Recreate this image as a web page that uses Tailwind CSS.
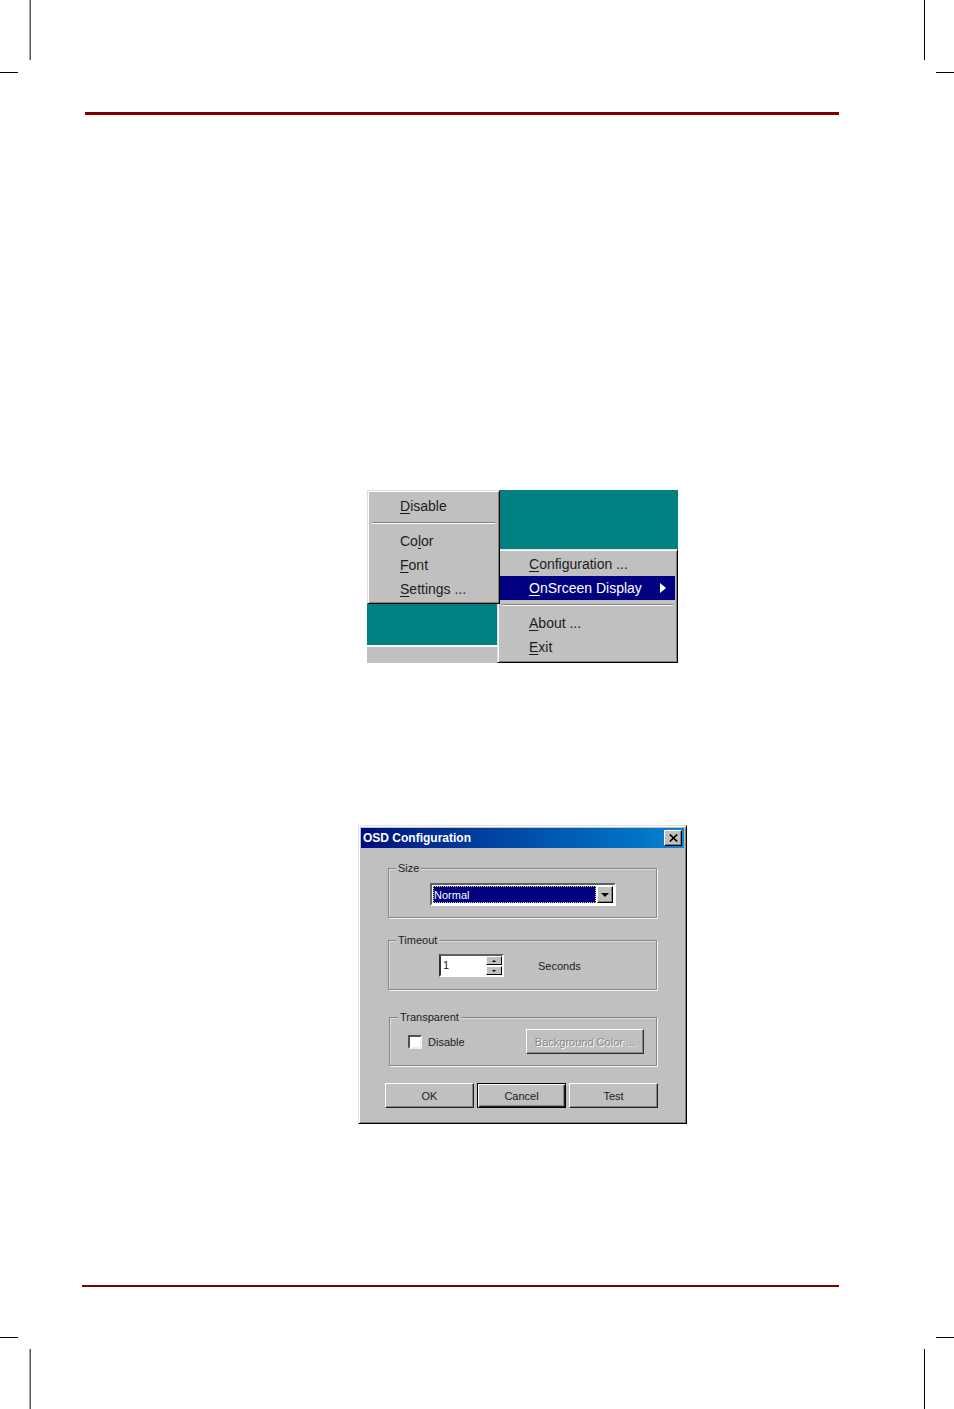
<!DOCTYPE html>
<html lang="en">
<head>
<meta charset="utf-8">
<title>OnScreen Display</title>
<script src="https://cdn.jsdelivr.net/npm/@tailwindcss/browser@4"></script>
</head>
<body class="bg-white font-['Liberation_Sans',Arial,sans-serif] text-[#1c1c1c]">
<div class="relative flex min-h-screen flex-col pr-[115px] pl-[85px]">
  <!-- crop marks -->
  <div aria-hidden="true">
    <i class="absolute top-0 left-[29px] h-15 w-px bg-[#a8a8a8]"></i><i class="absolute top-0 left-[30px] h-15 w-px bg-[#555555]"></i>
    <i class="absolute top-[72px] left-0 h-px w-[18px] bg-black"></i>
    <i class="absolute top-0 right-[29px] h-15 w-px bg-black"></i>
    <i class="absolute top-[72px] right-0 h-px w-[18px] bg-black"></i>
    <i class="absolute bottom-0 left-[29px] h-15 w-px bg-[#a8a8a8]"></i><i class="absolute bottom-0 left-[30px] h-15 w-px bg-[#555555]"></i>
    <i class="absolute bottom-[71px] left-0 h-px w-[18px] bg-black"></i>
    <i class="absolute right-[29px] bottom-0 h-15 w-px bg-black"></i>
    <i class="absolute right-0 bottom-[71px] h-px w-[18px] bg-black"></i>
  </div>

  <header class="mt-[112px] h-[3px] bg-[#800000]"></header>

  <main class="flex grow flex-col items-center pl-[121px]">
    <!-- tray menu with its submenu -->
    <section class="relative mt-[375px] flex h-[173px] w-[311px] bg-[#008080] text-[14px]">
      <div class="absolute bottom-0 left-0 h-[18px] w-[130px] border-t-2 border-white bg-[#c0c0c0]"></div>
      <div role="menu" class="z-10 flex h-[114px] w-[133px] flex-col self-start border border-t-[#dfdfdf] border-r-black border-b-black border-l-[#dfdfdf] bg-[#c0c0c0] pt-[3px] shadow-[inset_1px_1px_0_#fff,inset_-1px_-1px_0_#808080]">
        <button role="menuitem" class="h-6 pl-8 text-left"><u class="underline-offset-2">D</u>isable</button>
        <hr class="mx-1 mt-1 mb-[6px] h-[2px] shrink-0 border-t border-b border-t-[#808080] border-b-white">
        <button role="menuitem" class="h-[23px] pl-8 text-left">Co<u class="underline-offset-2">l</u>or</button>
        <button role="menuitem" class="h-6 pl-8 text-left"><u class="underline-offset-2">F</u>ont</button>
        <button role="menuitem" class="h-6 pl-8 text-left"><u class="underline-offset-2">S</u>ettings ...</button>
      </div>
      <div role="menu" class="z-[1] -ml-[3px] flex h-[114px] grow flex-col self-end border border-t-[#dfdfdf] border-r-black border-b-black border-l-[#dfdfdf] bg-[#c0c0c0] px-[2px] pt-[2px] shadow-[inset_1px_1px_0_#fff,inset_-1px_-1px_0_#808080]">
        <button role="menuitem" class="h-6 pl-[29px] text-left"><u class="underline-offset-2">C</u>onfiguration ...</button>
        <button role="menuitem" class="flex h-6 items-center justify-between bg-[#000080] pr-[9px] pl-[29px] text-left text-white"><span><u class="underline-offset-2">O</u>nSrceen Display</span>
          <svg class="h-[10px] w-[6px]" viewBox="0 0 6 10" fill="#fff"><path d="M0 0 6 5 0 10Z"/></svg>
        </button>
        <hr class="mx-[2px] mt-1 mb-[6px] h-[2px] border-t border-b border-t-[#808080] border-b-white">
        <button role="menuitem" class="h-[23px] pl-[29px] text-left"><u class="underline-offset-2">A</u>bout ...</button>
        <button role="menuitem" class="h-6 pl-[29px] text-left"><u class="underline-offset-2">E</u>xit</button>
      </div>
    </section>

    <!-- OSD Configuration dialog -->
    <form class="mt-[162px] w-[329px] border border-t-[#dfdfdf] border-r-black border-b-black border-l-[#dfdfdf] bg-[#c0c0c0] p-[2px] pb-[15px] text-[11px] leading-[14px] shadow-[inset_1px_1px_0_#fff,inset_-1px_-1px_0_#808080]">
      <div class="flex h-5 items-center justify-between bg-linear-to-r from-[#000a80] to-[#1084d0] pr-[2px] pl-[2px]">
        <h1 class="text-[12px] font-bold text-white">OSD Configuration</h1>
        <button type="button" aria-label="Close" class="flex h-4 w-[18px] items-center justify-center border border-t-white border-r-black border-b-black border-l-white bg-[#c0c0c0] shadow-[inset_-1px_-1px_0_#808080]">
          <svg class="h-[8px] w-[9px]" viewBox="0 0 9 8" stroke="#000" stroke-width="1.7"><path d="M.8.5 8.2 7.5M8.2.5.8 7.5"/></svg>
        </button>
      </div>

      <div class="flex flex-col px-[27px] pt-[13px]">
        <fieldset class="h-[57px] border border-[#868686] pt-2 pl-[41px] shadow-[1px_1px_0_#f4f4f4,inset_1px_1px_0_#dcdcdc]">
          <legend class="-ml-[34px] bg-[#c0c0c0] px-[2px]"><label for="size">Size</label></legend>
          <div class="flex h-[23px] w-[186px] border-2 border-t-[#606060] border-r-white border-b-white border-l-[#606060] bg-white p-px">
            <div class="flex grow border border-dotted border-[#d8d880] bg-[#000080]">
              <select id="size" class="w-full appearance-none bg-[#000080] text-white outline-none"><option>Normal</option></select>
            </div>
            <div class="pointer-events-none ml-px flex w-4 items-center justify-center border border-t-white border-r-black border-b-black border-l-white bg-[#c0c0c0] shadow-[inset_-1px_-1px_0_#808080]">
              <svg class="h-1 w-2" viewBox="0 0 8 4"><path d="M0 0H8L4 4Z"/></svg>
            </div>
          </div>
        </fieldset>

        <fieldset class="mt-[15px] h-[57px] border border-[#868686] pt-[7px] pl-[50px] shadow-[1px_1px_0_#f4f4f4,inset_1px_1px_0_#dcdcdc]">
          <legend class="-ml-[43px] bg-[#c0c0c0] px-[2px]"><label for="timeout">Timeout</label></legend>
          <div class="flex items-center">
            <div class="flex h-[23px] w-[65px] border-2 border-t-[#606060] border-r-white border-b-white border-l-[#303030] bg-white">
              <input id="timeout" type="text" value="1" class="w-0 grow pb-[2px] pl-[2px] outline-none">
              <div class="flex w-4 flex-col">
                <button type="button" aria-label="Increase" class="flex h-[9px] items-center justify-center border border-t-white border-r-black border-b-black border-l-white bg-[#c0c0c0]"><svg class="h-[2px] w-1" viewBox="0 0 4 2"><path d="M0 2H4L2 0Z"/></svg></button>
                <button type="button" aria-label="Decrease" class="mt-px flex h-[9px] items-center justify-center border border-t-white border-r-black border-b-black border-l-white bg-[#c0c0c0]"><svg class="h-[2px] w-1" viewBox="0 0 4 2"><path d="M0 0H4L2 2Z"/></svg></button>
              </div>
            </div>
            <span class="ml-[34px]">Seconds</span>
          </div>
        </fieldset>

        <fieldset class="mt-5 ml-px h-14 border border-[#868686] pt-[5px] pr-3 pl-[18px] shadow-[1px_1px_0_#f4f4f4,inset_1px_1px_0_#dcdcdc]">
          <legend class="-ml-[10px] bg-[#c0c0c0] px-[2px]">Transparent</legend>
          <div class="flex items-center justify-between">
            <label class="flex items-center gap-[6px]"><input type="checkbox" class="size-[14px] appearance-none border-2 border-t-[#505050] border-r-[#f0f0f0] border-b-[#f0f0f0] border-l-[#505050] bg-white">Disable</label>
            <button type="button" disabled class="h-[25px] w-[118px] border border-t-white border-r-[#303030] border-b-[#303030] border-l-white text-[#868686] shadow-[inset_-1px_-1px_0_#868686] text-shadow-[1px_1px_0_#fff]">Background Color ...</button>
          </div>
        </fieldset>

        <div class="mt-[17px] -mr-px -ml-[3px] flex gap-[3px]">
          <button type="button" class="h-[25px] flex-1 border border-t-white border-r-[#202020] border-b-[#202020] border-l-white shadow-[inset_-1px_-1px_0_#868686]">OK</button>
          <button type="button" class="h-[25px] flex-1 border border-black shadow-[inset_1px_1px_0_#fff,inset_-1px_-1px_0_#202020,inset_-2px_-2px_0_#868686]">Cancel</button>
          <button type="button" class="h-[25px] flex-1 border border-t-white border-r-[#202020] border-b-[#202020] border-l-white shadow-[inset_-1px_-1px_0_#868686]">Test</button>
        </div>
      </div>
    </form>
  </main>

  <footer class="mb-[122px] -ml-[3px] h-[2px] bg-[#800000]"></footer>
</div>
</body>
</html>
